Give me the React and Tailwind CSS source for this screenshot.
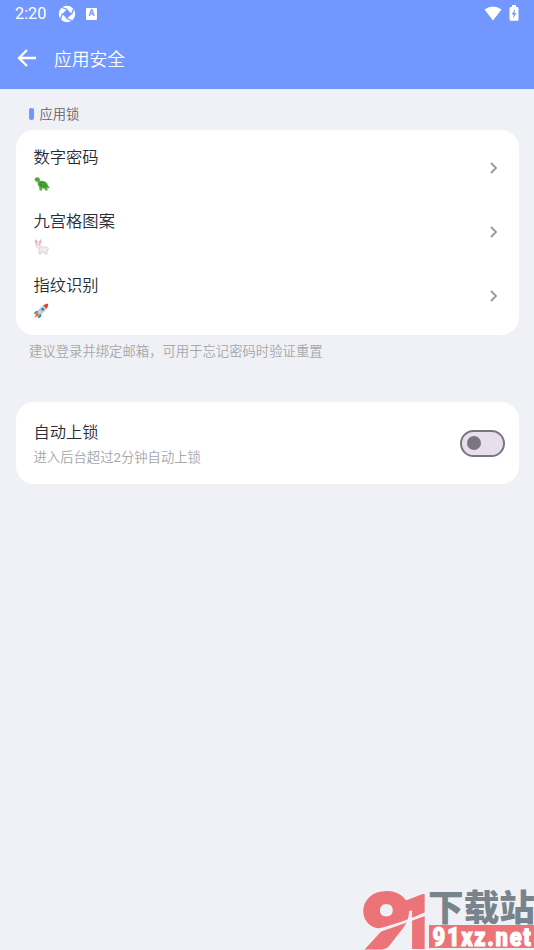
const rows = [
  { title: '数字密码', icon: <Turtle /> },
  { title: '九宫格图案', icon: <Rabbit /> },
  { title: '指纹识别', icon: <Rocket /> },
];

function Turtle() {
  return (
    <svg className="mt-[6px] block" width="16" height="16" viewBox="0 0 16 16">
      <path d="M.7 3.500C.8 1.400 3.600.6 5.200 2c1.100 1 .7 2 1 2.900 3-.7 6.600.7 7.700 4 .3 1 .8 1.700 1.600 2.300-.3 1.100-1.200 1.100-2 .8v2.500h-2.400l-.7-1.900H8.300L8 14.500H5.500L5.200 11C3.800 10 3.500 8.200 3.600 5.800 2 5.900.6 5 .7 3.500z" fill="#58b044" />
      <path d="M5.600 6.300c3-1.600 6.500 0 7.500 4.200-2 1.300-5.100 1-6.800-.2-.9-.7-1.100-2.500-.7-4z" fill="#3b8c31" />
      <path d="M7.300 7l1.200 1.400M10 7.200l.5 1.600M8 10l1.200-.7M11 10.300l.6-.8" stroke="#74c957" strokeWidth=".9" />
      <circle cx="3" cy="3" r=".5" fill="#23521e" />
    </svg>
  );
}

function Rabbit() {
  return (
    <svg className="mt-[5px] block" width="16" height="16" viewBox="0 0 16 16">
      <path d="M5 8.500c2-1 5.500-1 7.700-.2 1.800-.4 2.300 1.700 1 2.300l-.8 4.400h-2l-.5-2H7.500L7 15H5z" fill="#eeeced" stroke="#c8c3c4" strokeWidth=".6" />
      <path d="M1.800 5L.9 1.100C.8.300 1.900.3 2.400 1.200L3.600 4h1.300L6 1C6.500.1 7.500.4 7.300 1.300L6.600 5.200C7.300 7.500 6.500 9 4.500 9S1.100 7.300 1.800 5z" fill="#f3f0f1" stroke="#d2c9cb" strokeWidth=".5" />
      <path d="M1.700 1.600l1 2.600M6.600 1.600l-.9 2.600" stroke="#ec8fa6" strokeWidth="1.300" />
      <path d="M2.700 5.600h.7M5.200 5.600h.7" stroke="#d23e57" strokeWidth=".9" />
      <path d="M3.900 7h.9" stroke="#df8496" strokeWidth=".7" />
    </svg>
  );
}

function Rocket() {
  return (
    <svg className="mt-[5px] block" width="16" height="16" viewBox="1 0 16 16">
      <path d="M5.500 7.500L2.200 8.400.9 11l3.300-.4zM8.500 10.500l-.6 3.300-2.800 1.700.2-3.500z" fill="#2784c6" />
      <path d="M4.500 9.700l-2 1.300-1.200 3.700L5 13.500l1.400-2z" fill="#f3a62c" />
      <path d="M5 10l-2 2 .8.800 2.200-1.700z" fill="#e64a35" />
      <path d="M4.400 9.200C5.700 5.500 8.300 2.800 11 2l3 2.900c-.9 2.700-3.600 5.400-7.200 6.700z" fill="#c5d0d6" />
      <path d="M10.300 2.400C11.600 1.300 13 .7 15.200.7c.1 2.200-.6 3.700-1.600 5z" fill="#e44134" />
      <circle cx="9.700" cy="6.300" r="1.400" fill="#267fba" />
    </svg>
  );
}

function StatusBar() {
  return (
    <div className="flex h-[27px] items-center pr-[15px] pl-[15px] text-white">
      <span className="w-[43px] pt-px font-['Roboto',sans-serif] text-[16.300px] leading-[26px] font-[450]">2:20</span>
      <svg width="18" height="18" viewBox="0 0 18 18">
        <circle cx="9" cy="9" r="8.200" fill="#fff" />
        <path d="M9 4.200L13.800 9 9 13.800 4.200 9z" fill="#7298ff" />
        <path d="M9.500 4.500L4 2.500M13.500 9.500L15.500 4M8.500 13.500L14 15.500M4.500 8.500L2.500 14" stroke="#7298ff" strokeWidth="1.300" />
      </svg>
      <span className="ml-[10px] flex h-[12px] w-[11px] items-center justify-center rounded-[1px] bg-white font-['Roboto',sans-serif] text-[9px] leading-none font-bold text-[#7298ff]">A</span>
      <svg className="ml-auto" width="18" height="15" viewBox="0 0 18 15">
        <path d="M.5 3.500Q9-2.500 17.500 3.500L9 14.500z" fill="#fff" />
      </svg>
      <svg className="-mt-[2px] ml-[7px]" width="10" height="16" viewBox="0 0 10 16">
        <path d="M3 0h4v2h1.300q1.200 0 1.200 1.200v11.300q0 1.200-1.200 1.200H1.700Q.5 15.700.5 14.500V3.200Q.5 2 1.700 2H3z" fill="#fff" />
        <path d="M6 4L2.700 9.500h2L4 13.500 7.400 8h-2z" fill="#7298ff" />
      </svg>
    </div>
  );
}

function Watermark() {
  return (
    <svg className="absolute right-0 bottom-0" width="174" height="64" viewBox="360 886 174 64">
      <text fill="#ec7478" stroke="#ec7478" fontWeight="900">
        <tspan x="363" y="947" fontSize="73" strokeWidth="5" fontFamily="Lato" textLength="47" lengthAdjust="spacingAndGlyphs">9</tspan>
        <tspan x="397" y="948" fontSize="74" strokeWidth="2" fontFamily="Roboto" textLength="38" lengthAdjust="spacingAndGlyphs">1</tspan>
      </text>
      <path d="M372 930Q400 924 428 911V915Q400 925 374 934z" fill="#f0f1f6" />
      <text x="428" y="920.500" fontSize="36" fontWeight="900" fill="#78838c" fontFamily="Noto Sans CJK SC" textLength="107" lengthAdjust="spacingAndGlyphs">下载站</text>
      <path d="M429 925h105v23H429z" fill="#ec7478" />
      <text x="432.500" y="945.500" fontSize="26" fontWeight="900" letterSpacing="2" fill="#fff" stroke="#fff" strokeWidth="1.100" fontFamily="Roboto" textLength="100" lengthAdjust="spacingAndGlyphs">91xz.net</text>
    </svg>
  );
}

export default function App() {
  return (
    <div className="relative h-[950px] w-[534px] overflow-hidden bg-[#f0f1f6] font-['Roboto','Noto_Sans_CJK_SC',sans-serif] font-[350]">
      <header className="h-[89px] bg-[#7298ff]">
        <StatusBar />
        <div className="flex h-[62px] items-center pl-[17px] text-white">
          <svg width="20" height="20" viewBox="0 0 20 20" fill="none" stroke="#fff" strokeWidth="2.300">
            <path d="M19 10H2.500M10 2L2 10l8 8" />
          </svg>
          <h1 className="ml-[17px] pt-[3px] text-[17.800px] leading-[24px]">应用安全</h1>
        </div>
      </header>

      <main className="px-[15.500px]">
        <div className="flex h-[41px] items-center pt-[9px] pl-[13.500px]">
          <span className="h-[12px] w-[5px] rounded-[2px] bg-[#7298ff]" />
          <h2 className="ml-[5.500px] pt-[2px] text-[13.300px] leading-[20px] text-[#626366]">应用锁</h2>
        </div>

        <section className="h-[205px] rounded-[18px] bg-white pt-[7px] pr-[19.500px] pl-[18px]">
          {rows.map((row) => (
            <div key={row.title} className="flex h-[64px] items-center justify-between">
              <div>
                <h3 className="text-[16.300px] leading-[24px] text-[#292d38]">{row.title}</h3>
                <div className="flow-root h-[23px]">{row.icon}</div>
              </div>
              <svg className="-mt-[2px]" width="10" height="12" viewBox="0 0 10 12" fill="none" stroke="#999" strokeWidth="1.800">
                <path d="M2 1l5 5-5 5" />
              </svg>
            </div>
          ))}
        </section>
        <p className="mt-[7px] ml-[13.500px] text-[13.350px] leading-[20px] text-[#a6a7a9]">
          建议登录并绑定邮箱，可用于忘记密码时验证重置
        </p>

        <section className="mt-[40px] flex h-[82px] items-center justify-between rounded-[18px] bg-white pr-[13.500px] pl-[18px]">
          <div className="pt-[2px]">
            <h3 className="text-[16.300px] leading-[24px] text-[#292d38]">自动上锁</h3>
            <p className="mt-[3px] text-[13.330px] leading-[20px] text-[#a6a7a9]">
              进入后台超过<span className="font-normal">2</span>分钟自动上锁
            </p>
          </div>
          <button className="flex h-[27px] w-[45px] items-center rounded-full border-2 border-[#7b7481] bg-[#e7dfec] pl-[5px]">
            <span className="size-[14px] rounded-full bg-[#7b7481]" />
          </button>
        </section>
      </main>
      <Watermark />
    </div>
  );
}
